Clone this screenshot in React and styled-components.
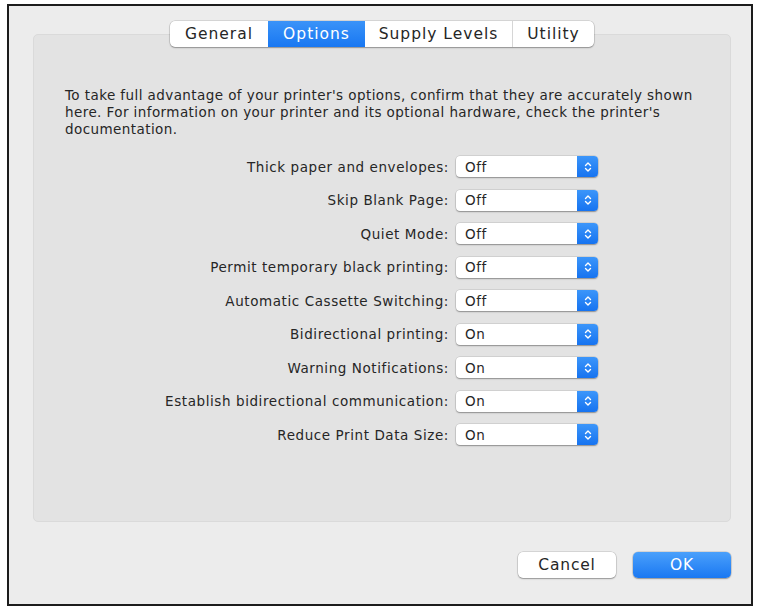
import React from 'react';
import styled, { createGlobalStyle } from 'styled-components';

const GlobalStyle = createGlobalStyle`
  html, body {
    margin: 0;
    padding: 0;
    background: #ffffff;
  }
  body {
    font-family: "DejaVu Sans", "Liberation Sans", sans-serif;
    color: #262626;
  }
`;

const Window = styled.div`
  box-sizing: border-box;
  margin: 4px 0 0 7px;
  width: 746px;
  height: 602px;
  border: 2px solid #1c1c1c;
  background: #ececec;
  padding: 15px 20px 0 24px;
  display: flex;
  flex-direction: column;
`;

const TabBar = styled.div`
  display: flex;
  justify-content: center;
  position: relative;
  z-index: 1;
  margin-bottom: -13px;
`;

const Tabs = styled.div`
  display: flex;
  height: 26px;
  border-radius: 5px;
  background: #ffffff;
  box-shadow: 0 0 0 0.5px rgba(0, 0, 0, 0.18), 0 1px 1.5px rgba(0, 0, 0, 0.3);
  overflow: hidden;
`;

const Tab = styled.div`
  display: flex;
  align-items: center;
  justify-content: center;
  width: ${p => p.$w}px;
  font-size: 15.5px;
  letter-spacing: 1px;
  color: ${p => (p.$active ? '#ffffff' : '#262626')};
  background: ${p => (p.$active ? 'linear-gradient(#3a93f8, #1877f2)' : 'transparent')};
  border-left: ${p => (p.$first || p.$active || p.$afterActive ? 'none' : '1px solid #d6d6d6')};
`;

const Panel = styled.div`
  box-sizing: border-box;
  height: 488px;
  background: #e3e3e3;
  border: 1px solid #dadada;
  border-radius: 5px;
  padding: 52px 20px 0 31px;
`;

const Description = styled.p`
  margin: 0 0 12px;
  font-size: 13.5px;
  letter-spacing: 0.42px;
  line-height: 17px;
  white-space: nowrap;
`;

const Rows = styled.div`
  display: flex;
  flex-direction: column;
`;

const Row = styled.div`
  display: flex;
  align-items: center;
  height: 33.5px;
`;

const Label = styled.div`
  width: 384px;
  text-align: right;
  font-size: 13.5px;
  letter-spacing: 0.58px;
  padding-right: 7px;
  white-space: nowrap;
`;

const Popup = styled.div`
  display: flex;
  width: 142px;
  height: 21px;
  background: #ffffff;
  border-radius: 4px;
  box-shadow: 0 0 0 0.5px rgba(0, 0, 0, 0.15), 0 1px 1.5px rgba(0, 0, 0, 0.32);
  overflow: hidden;
`;

const PopupValue = styled.div`
  flex: 1;
  display: flex;
  align-items: center;
  padding-left: 9px;
  font-size: 13.5px;
  letter-spacing: 0.5px;
`;

const PopupArrows = styled.div`
  width: 21px;
  display: flex;
  align-items: center;
  justify-content: center;
  background: linear-gradient(#3c96fa, #1673f0);
`;

const Footer = styled.div`
  display: flex;
  justify-content: flex-end;
  gap: 17px;
  margin-top: 30px;
`;

const Button = styled.button`
  width: 98px;
  height: 26px;
  border: none;
  border-radius: 5px;
  font-family: "DejaVu Sans", "Liberation Sans", sans-serif;
  font-size: 15.5px;
  letter-spacing: 0.8px;
  color: ${p => (p.$primary ? '#ffffff' : '#262626')};
  background: ${p => (p.$primary ? 'linear-gradient(#4aa0fb, #1a78f2)' : '#ffffff')};
  box-shadow: 0 0 0 0.5px rgba(0, 0, 0, 0.18), 0 1px 1.5px rgba(0, 0, 0, 0.3);
`;

const Arrows = () => (
  <svg width="8" height="12" viewBox="0 0 8 12">
    <path d="M1.5 4.5 L4 2 L6.5 4.5 M1.5 7.5 L4 10 L6.5 7.5" fill="none" stroke="#ffffff" strokeWidth="1.4" strokeLinecap="round" strokeLinejoin="round" />
  </svg>
);

const tabs = [
  { name: 'General', w: 98 },
  { name: 'Options', w: 97, active: true },
  { name: 'Supply Levels', w: 147 },
  { name: 'Utility', w: 81 },
];

const options = [
  ['Thick paper and envelopes', 'Off'],
  ['Skip Blank Page', 'Off'],
  ['Quiet Mode', 'Off'],
  ['Permit temporary black printing', 'Off'],
  ['Automatic Cassette Switching', 'Off'],
  ['Bidirectional printing', 'On'],
  ['Warning Notifications', 'On'],
  ['Establish bidirectional communication', 'On'],
  ['Reduce Print Data Size', 'On'],
];

export default function App() {
  return (
    <>
      <GlobalStyle />
      <Window>
        <TabBar>
          <Tabs>
            {tabs.map((t, i) => (
              <Tab
                key={t.name}
                $w={t.w}
                $active={t.active}
                $first={i === 0}
                $afterActive={i > 0 && tabs[i - 1].active}
              >
                {t.name}
              </Tab>
            ))}
          </Tabs>
        </TabBar>
        <Panel>
          <Description>
            To take full advantage of your printer's options, confirm that they are accurately shown
            <br />
            here. For information on your printer and its optional hardware, check the printer's
            <br />
            documentation.
          </Description>
          <Rows>
            {options.map(([label, value]) => (
              <Row key={label}>
                <Label>{label}:</Label>
                <Popup>
                  <PopupValue>{value}</PopupValue>
                  <PopupArrows>
                    <Arrows />
                  </PopupArrows>
                </Popup>
              </Row>
            ))}
          </Rows>
        </Panel>
        <Footer>
          <Button>Cancel</Button>
          <Button $primary>OK</Button>
        </Footer>
      </Window>
    </>
  );
}
